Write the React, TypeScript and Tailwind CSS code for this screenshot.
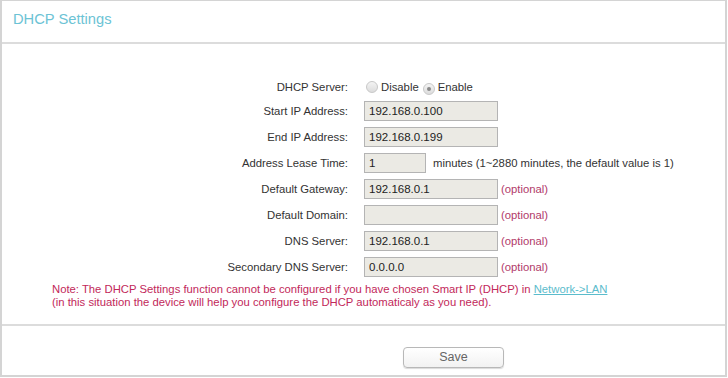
import React from 'react';

const rows: { label: string; value: string; width: string; extra?: 'optional' | 'minutes' }[] = [
  { label: 'Start IP Address:', value: '192.168.0.100', width: 'w-[134px]' },
  { label: 'End IP Address:', value: '192.168.0.199', width: 'w-[134px]' },
  { label: 'Address Lease Time:', value: '1', width: 'w-[62px]', extra: 'minutes' },
  { label: 'Default Gateway:', value: '192.168.0.1', width: 'w-[134px]', extra: 'optional' },
  { label: 'Default Domain:', value: '', width: 'w-[134px]', extra: 'optional' },
  { label: 'DNS Server:', value: '192.168.0.1', width: 'w-[134px]', extra: 'optional' },
  { label: 'Secondary DNS Server:', value: '0.0.0.0', width: 'w-[134px]', extra: 'optional' },
];

const Radio = ({ checked }: { checked?: boolean }) => (
  <span className="inline-flex w-[12px] h-[12px] rounded-full border border-[#c8c8c8] bg-gradient-to-b from-[#f4f4f4] to-[#dcdcdc] items-center justify-center">
    {checked && <span className="w-[4px] h-[4px] rounded-full bg-[#8a8a8a]" />}
  </span>
);

export default function App() {
  return (
    <div className="w-[728px] h-[378px] bg-white font-['Liberation_Sans',Arial,sans-serif] text-[11.3px] text-[#333]">
      <div className="w-[727px] h-[377px] border-l-2 border-r-2 border-t border-b-2 border-[#d4d4d4] flex flex-col">
        <div className="h-[43px] border-b-2 border-[#dcdcdc] pl-[11px] pt-[8px]">
          <h1 className="text-[14.7px] text-[#6cc3d5] leading-[20px]">DHCP Settings</h1>
        </div>
        <div className="flex-1 pt-[35px] flex flex-col">
          <div className="flex items-center h-[16px]">
            <div className="w-[346px] text-right">DHCP Server:</div>
            <div className="ml-[18px] flex items-center">
              <Radio />
              <span className="ml-[3px]">Disable</span>
              <span className="ml-[4px]"><Radio checked /></span>
              <span className="ml-[3px]">Enable</span>
            </div>
          </div>
          <div className="flex flex-col gap-[6px] mt-[6px]">
            {rows.map((r) => (
              <div key={r.label} className="flex items-center h-[20px]">
                <div className="w-[346px] text-right">{r.label}</div>
                <div className={`ml-[16px] h-[20px] ${r.width} border border-[#b4b4b4] bg-[#ebeae4] text-[#222] pl-[4px] leading-[19px] text-[11.5px]`}>
                  {r.value}
                </div>
                {r.extra === 'optional' && <span className="ml-[3px] text-[#b13a6a]">(optional)</span>}
                {r.extra === 'minutes' && (
                  <span className="ml-[7px]">minutes (1~2880 minutes, the default value is 1)</span>
                )}
              </div>
            ))}
          </div>
          <div className="mt-[6px] pl-[50px] text-[#c2285a] leading-[13px]">
            <div>
              Note: The DHCP Settings function cannot be configured if you have chosen Smart IP (DHCP) in{' '}
              <span className="text-[#5bbccc] underline">Network-&gt;LAN</span>
            </div>
            <div>(in this situation the device will help you configure the DHCP automaticaly as you need).</div>
          </div>
        </div>
        <div className="h-[51px] border-t-2 border-[#dcdcdc] flex items-start pt-[21px]">
          <button className="ml-[401px] w-[101px] h-[21px] rounded-[4px] border border-[#b8b8b8] bg-gradient-to-b from-white to-[#f2f2f2] shadow-[0_1px_1px_rgba(0,0,0,0.15)] text-[#666] text-[12.5px] leading-[19px]">
            Save
          </button>
        </div>
      </div>
    </div>
  );
}
